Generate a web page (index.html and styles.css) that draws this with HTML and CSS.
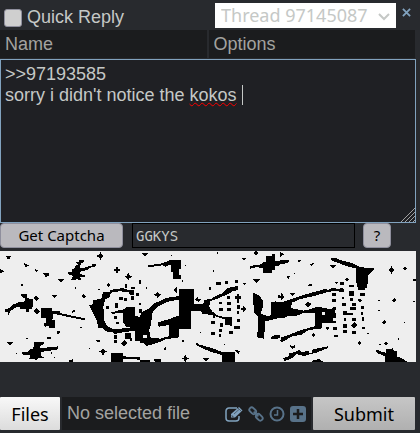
FILE: index.html
```html
<!DOCTYPE html>
<html lang="en">
<head>
  <meta charset="utf-8">
  <title>Quick Reply</title>
  <link rel="stylesheet" href="styles.css">
</head>
<body>
  <form class="quick-reply">
    <div class="header">
      <input type="checkbox" id="auto-hide">
      <label for="auto-hide">Quick Reply</label>
      <div class="thread">
        <select aria-label="Thread">
          <option>Thread 97145087</option>
        </select>
        <svg class="arrow" viewBox="0 0 12 8"><path d="M1 1l5 5 5-5"/></svg>
      </div>
      <a href="#" class="close" aria-label="Close"><svg viewBox="0 0 10 10"><path d="M1 1l8 8M9 1l-8 8"/></svg></a>
    </div>

    <div class="persona">
      <input type="text" placeholder="Name" aria-label="Name">
      <input type="text" placeholder="Options" aria-label="Options">
    </div>

    <div class="comment">
      <!-- spelling marks and the caret, under the text -->
      <div class="marks" aria-hidden="true">&gt;&gt;97193585
sorry i didn't notice the <span class="misspelled">kokos</span> <span class="caret"></span></div>
      <textarea aria-label="Comment" spellcheck="false">&gt;&gt;97193585
sorry i didn't notice the kokos </textarea>
      <svg class="grip" viewBox="0 0 14 14"><path d="M0 14L14 0M4 14L14 4M8 14l6-6M12 14l2-2"/></svg>
    </div>

    <div class="captcha-row">
      <button type="button" class="get-captcha">Get Captcha</button>
      <input type="text" value="GGKYS" aria-label="Captcha" spellcheck="false">
      <button type="button" class="help">?</button>
    </div>

    <svg class="captcha" viewBox="0 9 1248 333" role="img" aria-label="Captcha image">
      <!-- left part -->
      <g>
        <path d="M18 24h15l-5 10h-4zM73 46l14 6-12 7zM0 63l14 6-14 7zM105 63l10 5-7 4zM128 74h20v7l-10 8zM174 93h20l-10 11zM156 142h14l-7 9zM20 281h20l-10 11z"/>
        <path d="M301 12l4 8 8 4-8 4-4 8-4-8-8-4 8-4zM351 55l4 8 8 3-8 4-4 7-4-7-8-4 8-3zM385 75l4 7 9 4-9 4-4 8-4-8-8-4 8-4zM251 137l7 8-7 7-7-7zM326 104l6 7-6 7-6-7zM309 299l4 8 8 4-8 4-4 8-4-8-8-4 8-4zM110 181l10 9-10 10-10-10zM109 142l8 9-8 9-8-9z"/>
        <path d="M228 43h10v-7h15v6l-10 4-5 14 12 1 10-5 16-2 2-7h10v8l-16 4-13 8-17 2-3 10 15 1v8h-14l4 9h-8l-6-6-4 6-12-2 5-12-15-4v-7h12v-8l10-4 1-10h7z"/>
        <path d="M62 139h20v12l15 2 3 8-3 21-9 1v10h-8l-4-10H62l-5-8-14 6-12 8-4 12h-4v-10h-9v-7l16-4 7-9 19-8 19-3v-8l-8-5z"/>
        <path d="M123 181h32l2 8 22 1v6l-19 1-3 18 8 2v24h-18v-8l-12 4-4-12h8v-16h-16zM168 193l88 18v7l-12-3-80-17zM216 189l10-5v6l-10 5z"/>
        <path d="M103 283h29l-2 7-9 4-1 6 30-2 24-3v9l-25 4-27 4 1 13 8 2v4h-16l-5 6-9-4-14 1 4-12-26-3v-7h17l6-7 12-2 1-12z"/>
        <path d="M333 315h36v10l51 3v7l-51-3v10h-36zM207 338l12-4v8h-12zM142 268h11v5h-11zM171 249h11l-6 9h-6zM287 276h12v7h-8z"/>
        <path d="M358 147h11v9h-11zM372 150h9v10h-9zM318 175h9v8h-9zM346 166h9v14h-9zM341 205h9v9h-9zM349 221h9v8h-9zM376 107h6v13h-6zM393 116h13v6h-13zM392 145h11v11h-11zM408 134h9v9h-9zM416 164h8v8h-8zM416 184h9v12h-9zM341 262h9v12h-9zM341 276h9v9h-9zM376 256h18v18h-18zM372 276l10 10-10 10-9-10zM389 271h8v7h-8zM417 97h7v12h-7z"/>
        <path d="M64 109h5v4h-5zM224 118h4v4h-4zM295 122h4v4h-4zM241 237h4v4h-4zM79 270h4v4h-4zM266 300h4v4h-4zM162 326h4v4h-4zM153 313h4v4h-4zM48 315h4v4h-4z"/>
      </g>
      <g transform="translate(240 66)">
        <path d="M27 106l11-3V90l26-3 5-20 20-2 2-6 28-2 4-4 24 7h16v14h-12l-6-8-26-2-27 4-2 12-14 8-6 22 3 42 6 14 18 10h26l30-4 24-4v10l-26 6-28 4-18 4-8-6-23-2-1-8-18-2-6-26z"/>
        <path d="M92 128l20-6 18-4 10-6 24-2v26l16 6 14-12 18-4 14-12 14-8v86l-30 16-18-10v16h-28v-30l-12-12-14-2-8-12-2-28-14-2-16 4z"/>
      </g>
      <!-- middle part -->
      <g transform="translate(420 0)">
        <path d="M6 15h18l-9 10zM306 31h12l-6 6zM338 93h22l-11 12zM307 105h11l-6 6zM188 331h21l-10 10zM284 307l17 1-6 10zM346 9h5l5 7-8 7-6-8zM229 101h13v11h-13zM285 97h8v7h-8zM256 100h8v8h-8zM206 117h7v8h-7z"/>
        <path d="M53 130l4 7 8 3-8 4-4 8-4-8-9-4 9-3zM136 321l4 7 8 3-8 4-4 8-4-8-8-4 8-3zM111 117v18l-11-9zM173 145v7h12l-10 10-11-7zM78 296v12l-8-6zM311 174l5 6 7 3-7 3-5 7-4-7-8-3 8-3z"/>
        <path d="M92 35h30v28h-6v19h8v12h-26V72h-6V50l-16 6-8-4-44 6v-6l38-5 15-5z"/>
        <path d="M378 25h18v-6h10v21h14v12l-14 2v12h-10v9h-26V61l-20-4-20 5v-6l10-4 20-2 12-8h6z"/>
        <path d="M262 143h7v10h-7zM262 161h10v9h-10zM238 161h7v8h-7zM238 179h10v9h-10zM262 181h10v8h-10zM291 137h5v27h-5zM284 145h20v8h-20zM291 172h10v10h-10zM290 190h8v8h-8zM218 204h8v7h-8zM214 218h10v10h-10zM240 226h10v12h-10zM292 213h8v9h-8zM283 234h17v8h-17zM236 242h9v9h-9zM214 253h10v8h-10zM236 257h8v9h-8zM268 250h10v8h-10z"/>
        <path d="M168 283l10 7 31 8 41 15h34v29h-38v-21l-31-9-30-12-17-10z"/>
        <path d="M0 336h30v6H0zM40 332l24 2v8H45zM92 20h5v4h-5zM17 118h4v4h-4zM135 51h4v4h-4zM230 13h4v4h-4zM218 67h5v5h-5zM126 97h4v4h-4zM180 251h4v4h-4zM252 288h4v4h-4zM127 276h6v5h-6zM414 140h6v10h-6z"/>
      </g>
      <g transform="translate(420 66)">
        <path d="M0 138l8-14 20-8 14-16 18-6 18-10 40-6V56h44v46h28l4-12 22-4 10-8 20-8 16-16 32-6v12l-16 4-14 8-18 8-18 8-18 6-2 16 8 14 16 12 22 6 22-2v28l-20-4-2-16-26-8-18-6-22-2-6-8h-28v54h-38v24l-40 6-16 8-26 8-16 4-10-10H0z"/>
        <path fill="#eee" d="M118 88l-38 8-28 14-16 20-2 28-6 22 2 22 32 4 26-8V164l-30 6-6-12 26-8 40-10z"/>
        <path d="M54 158l26-8 26-10 14-4v14l-28 14-36 6z"/>
        <path fill="#eee" d="M10 196h10v8H10z"/>
      </g>
      <g transform="translate(720 66)">
        <path d="M40 68l20 10 8 14v20l-6 18 18 8 14-2V98l12-4 14 8 14-8 24-8 42-14 52-14h8v9l-30 9-48 11-26 11-4 16 38 8 20-4 18-6 32 1 6 7 18-8v16l-8 8-2 14-18 4-12 6-4 14-38 8-18 12-30 6-26 16-8-2 4-12 24-8 36-14 42-12V130h-40l-10 6-34 3-24 5-34 8-8 2-4 52-20-4 2-62-12-12V106H40z"/>
        <path d="M94 96h40v48H94zM230 118h50v40h-34l-2 20h-18z"/>
        <path d="M94 200l16-6h10v8l-10 6H94zM148 224l10 4 8-3v6l-8 6-6-5z"/>
        <path fill="#eee" d="M246 126h10v8h-10z"/>
      </g>
      <!-- right part -->
      <g transform="translate(840 0)">
        <path d="M0 35h26v8l-13 4H0zM54 35h10l-4 7h-5zM91 49l12-6v5l-11 6zM22 85h9l-8 10zM0 12l12 7-12 9zM87 109h8v6H82zM29 136h18l-9 9zM148 52h22l-11 10zM292 156h10l-5 6zM292 186h10l-5 6zM400 94h8v6h-8z"/>
        <path d="M334 54l3 6 7 5-6 5-3 9-4-9-6-5 6-5zM376 55l6 7-6 6-7-6zM343 151l6 6-6 6-7-6zM313 217l6 6-6 6-7-6zM239 152l7 5-7 6-7-6zM238 280l6 6-6 6-6-6zM317 281l7 5-7 6-6-6zM201 89l7 6-7 6-6-6zM101 254l6 7-6 6-7-6zM84 160l11 9-11 9-10-9zM5 135l8 11-8 10-5-10z"/>
        <path d="M154 31h14l24 8 25 6 18 10 28 6h20l-8 12-11 8-2 38h-8v6h-19l-4-13-4-17 2-33-20-5-26-9-16-6-13-5z"/>
        <path d="M140 127l20-8 13 4 16-3 5 12h-11l-20-4-19 5z"/>
        <path d="M162 102h12l-6 6zM181 102h12v9h-12zM155 135h12v8h-12zM156 153h12v9h-12zM160 177h9v9h-9zM160 196h9v13h-9zM160 218h9v8h-9zM160 238h12v8h-12zM162 260h11v8h-11zM208 110h15v8h-15zM207 128h14v15h-14zM209 150h10v9h-10zM215 165h12v9h-12zM209 177h18v8h-18zM185 146h8v8h-8zM187 165h12v9h-12zM190 188h10v12h-10zM200 194h20v8h-20zM191 211h8v7h-8zM190 229h12v10h-12zM190 246h12v8h-12zM217 210h12v9h-12zM223 223l10 9-10 10-10-10zM217 250h11v8h-11zM241 134h13v9h-13zM244 174h8v10h-8zM242 191h8v10h-8zM245 208h8v12h-8zM246 236h8v8h-8z"/>
        <path d="M10 331l16-7 3-9 18-3 10-6 7 7 22-5v8h9v-10l22-6 26-5v6l-17 6-18 8-18 3-17 6-24-6-6 8-12 7-18 7zM97 338l20-5 15 9H95zM136 236l12 3-6 7z"/>
        <path d="M288 304l14 6 15 4v-12h18l5-3v8l10 2v16l8 2 16 9 8 6h-66v-16l-20-9-9-6z"/>
        <path d="M42 75h4v4h-4zM400 158h4v4h-4zM372 221h4v4h-4zM262 254h5v4h-5zM354 271h4v4h-4zM298 287h4v4h-4z"/>
      </g>
    </svg>

    <div class="file-row">
      <button type="button" class="files">Files</button>
      <div class="file-info">
        <span class="filename">No selected file</span>
        <a href="#" class="active" aria-label="Draw"><svg viewBox="0 0 36 32"><path d="M24 4H8a6 6 0 0 0-6 6v14a6 6 0 0 0 6 6h14a6 6 0 0 0 6-6v-4" fill="none" stroke="currentColor" stroke-width="3"/><path d="M12 16L28 2l7 7-15 14h-8z" fill="currentColor"/><path d="M18 16l10-9M26 4l7 7M14 18v3h3" fill="none" stroke="#1b1c1e" stroke-width="1"/></svg></a>
        <a href="#" aria-label="Link"><svg viewBox="0 0 34 34"><g fill="none" stroke="currentColor" stroke-width="4"><rect x="2" y="5" width="16" height="10" rx="5" transform="rotate(45 10 10)"/><rect x="16" y="19" width="16" height="10" rx="5" transform="rotate(45 24 24)"/><path d="M12 12l10 10"/></g></svg></a>
        <a href="#" aria-label="Timer"><svg viewBox="0 0 32 32"><g fill="none" stroke="currentColor"><circle cx="16" cy="16" r="13" stroke-width="4"/><path d="M17 8v10h-7" stroke-width="3"/></g></svg></a>
        <a href="#" aria-label="Add"><svg viewBox="0 0 32 32"><rect width="32" height="32" rx="6" fill="currentColor"/><path d="M16 6v20M6 16h20" stroke="#1b1c1e" stroke-width="5"/></svg></a>
      </div>
      <button type="submit" class="submit">Submit</button>
    </div>
  </form>
</body>
</html>
```
FILE: styles.css
```css
* {
  box-sizing: border-box;
}

body {
  margin: 0;
  background-color: #282a2e;
  font-family: "Liberation Sans", Arial, sans-serif;
  font-size: 18px;
  color: #c5c8c6;
}

.quick-reply {
  padding-right: 4px;
}

input,
select,
textarea,
button {
  margin: 0;
  font: inherit;
  color: inherit;
  border-radius: 0;
}

svg {
  display: block;
}

/* Header */
.header {
  display: flex;
  align-items: center;
  height: 30px;
  padding-left: 4px;
}

.header input {
  appearance: none;
  width: 18px;
  height: 18px;
  margin: 6px 5px 0 0;
  background-color: #cfcfcf;
  border: 1px solid #8f8f9d;
  border-radius: 3px;
}

.header label {
  flex: 1;
  padding-top: 5px;
}

.thread {
  position: relative;
  width: 181px;
}

.thread select {
  appearance: none;
  display: block;
  width: 100%;
  height: 25px;
  padding: 0 6px;
  border: none;
  background-color: #fff;
  font-family: "Noto Sans", sans-serif;
  line-height: 25px;
}

.arrow {
  position: absolute;
  top: 10px;
  right: 6px;
  width: 12px;
  height: 8px;
  fill: none;
  stroke: #c5c8c6;
  stroke-width: 2;
  pointer-events: none;
}

.close {
  margin: 0 5px 6px 6px;
  color: #81a2be;
}

.close svg {
  width: 9px;
  height: 9px;
  stroke: currentColor;
  stroke-width: 2;
}

/* Name and options */
.persona {
  display: flex;
  gap: 2px;
  padding-right: 1px;
}

.persona input {
  flex: 1;
  min-width: 0;
  height: 28px;
  padding: 0 5px;
  border: none;
  background-color: #1b1c1e;
}

.persona input::placeholder {
  color: #a3a3a0;
  opacity: 1;
}

/* Comment */
.comment {
  position: relative;
  margin-top: 1px;
  background-color: #1f2024;
}

.comment textarea,
.marks {
  width: 100%;
  height: 164px;
  padding: 4px;
  border: 1px solid #81a2be;
  line-height: 21px;
  white-space: pre-wrap;
}

.comment textarea {
  position: relative;
  display: block;
  background: transparent;
  outline: none;
  resize: none;
}

.marks {
  position: absolute;
  inset: 0;
  color: transparent;
}

.misspelled {
  text-decoration: underline wavy #f00 1px;
}

.caret {
  border-left: 1px solid #c5c8c6;
}

.grip {
  position: absolute;
  right: 1px;
  bottom: 1px;
  width: 14px;
  height: 14px;
  stroke: #a0a0a0;
}

/* Captcha */
.captcha-row {
  display: flex;
  height: 25px;
  margin-bottom: 3px;
  font-family: "Noto Sans", sans-serif;
  font-size: 15px;
}

.captcha-row button {
  padding: 0;
  background-color: #bab9be;
  border: 1px solid #8f8f9d;
  border-radius: 4px;
  color: #000;
  line-height: 23px;
}

.captcha-row .get-captcha {
  width: 123px;
}

.captcha-row input {
  flex: 1;
  min-width: 0;
  margin: 0 8px 0 9px;
  padding: 0 3px;
  border: 1px solid #000;
  background-color: #282a2e;
  font-family: "DejaVu Sans Mono", monospace;
  font-size: 14px;
}

.captcha-row .help {
  width: 28px;
  margin-right: 25px;
}

.captcha {
  width: 100%;
  background-color: #eee;
  shape-rendering: crispEdges;
}

/* File row */
.file-row {
  display: flex;
  gap: 2px;
  height: 33px;
  margin-top: 35px;
  padding-right: 1px;
}

.file-row button {
  padding: 0;
  border: none;
  border-radius: 1px;
  color: #000;
  font-family: "Noto Sans", sans-serif;
}

.file-row .files {
  width: 60px;
  background: linear-gradient(#f8f8f8, #dcdcdc);
}

.file-info {
  display: flex;
  flex: 1;
  align-items: center;
  gap: 5px;
  padding: 0 5px;
  background-color: #1b1c1e;
}

.filename {
  flex: 1;
  color: #a3a3a0;
}

.file-info a {
  color: #587289;
}

.file-info .active {
  color: #81a2be;
}

.file-info svg {
  width: 16px;
  height: 16px;
}

.file-info .active svg {
  width: 18px;
}

.file-row .submit {
  width: 102px;
  background: linear-gradient(#c6c6c6, #b0b0b0);
}
```
